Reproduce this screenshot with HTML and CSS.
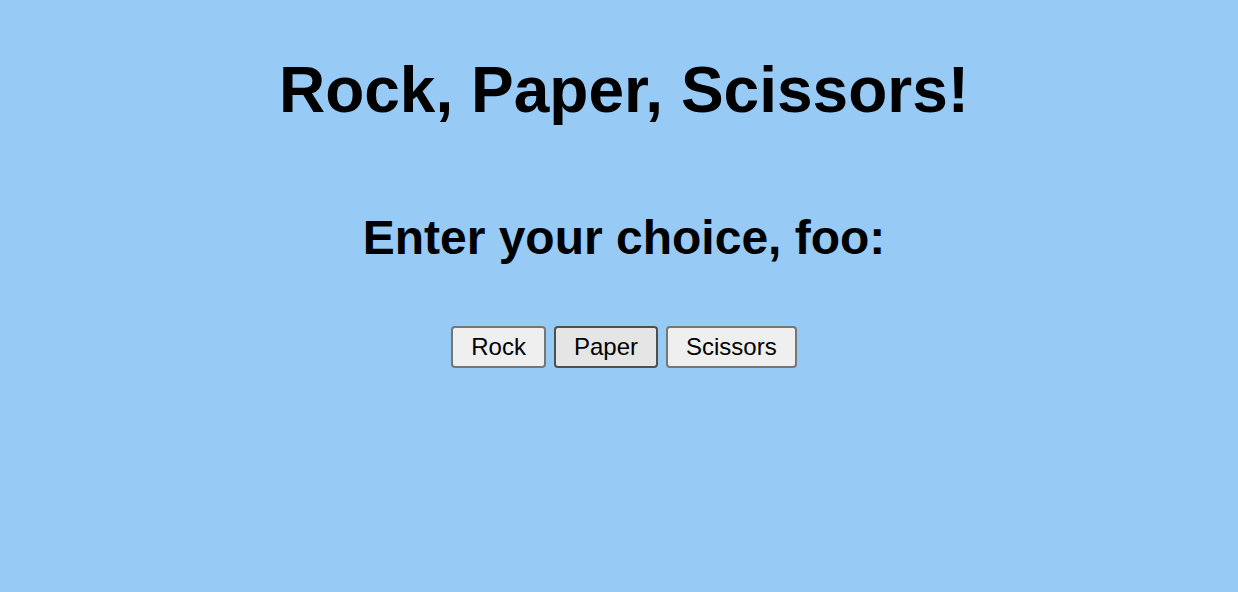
FILE: index.html
```html
<!DOCTYPE html>
<html lang="en">
<head>
<meta charset="utf-8">
<title>Rock, Paper, Scissors!</title>
<link rel="stylesheet" href="styles.css">
</head>
<body>
<main class="page">
  <h1 class="title">Rock, Paper, Scissors!</h1>
  <h2 class="prompt">Enter your choice, foo:</h2>
  <div class="choices">
    <button class="choice">Rock</button>
    <button class="choice choice--hover">Paper</button>
    <button class="choice">Scissors</button>
  </div>
</main>
</body>
</html>
```

FILE: styles.css
```css
html, body {
  margin: 0;
  padding: 0;
}
body {
  background: #97caf5;
  font-family: "Liberation Sans", Arial, sans-serif;
  color: #000;
  min-height: 592px;
}
.page {
  display: flex;
  flex-direction: column;
  align-items: center;
  padding-left: 10px;
}
.title {
  margin: 53px 0 0;
  font-size: 64px;
  line-height: 74px;
  font-weight: bold;
}
.prompt {
  margin: 83px 0 0;
  font-size: 48px;
  line-height: 55px;
  font-weight: bold;
}
.choices {
  margin-top: 61px;
  display: flex;
  gap: 8px;
}
.choice {
  font-family: "Liberation Sans", Arial, sans-serif;
  font-size: 24px;
  line-height: 27px;
  padding: 5px 18px 6px;
  border: 2px solid #767676;
  border-radius: 4px;
  background: #efefef;
  color: #000;
}
.choice--hover {
  background: #e5e5e5;
  border-color: #4f4f4f;
}
```
